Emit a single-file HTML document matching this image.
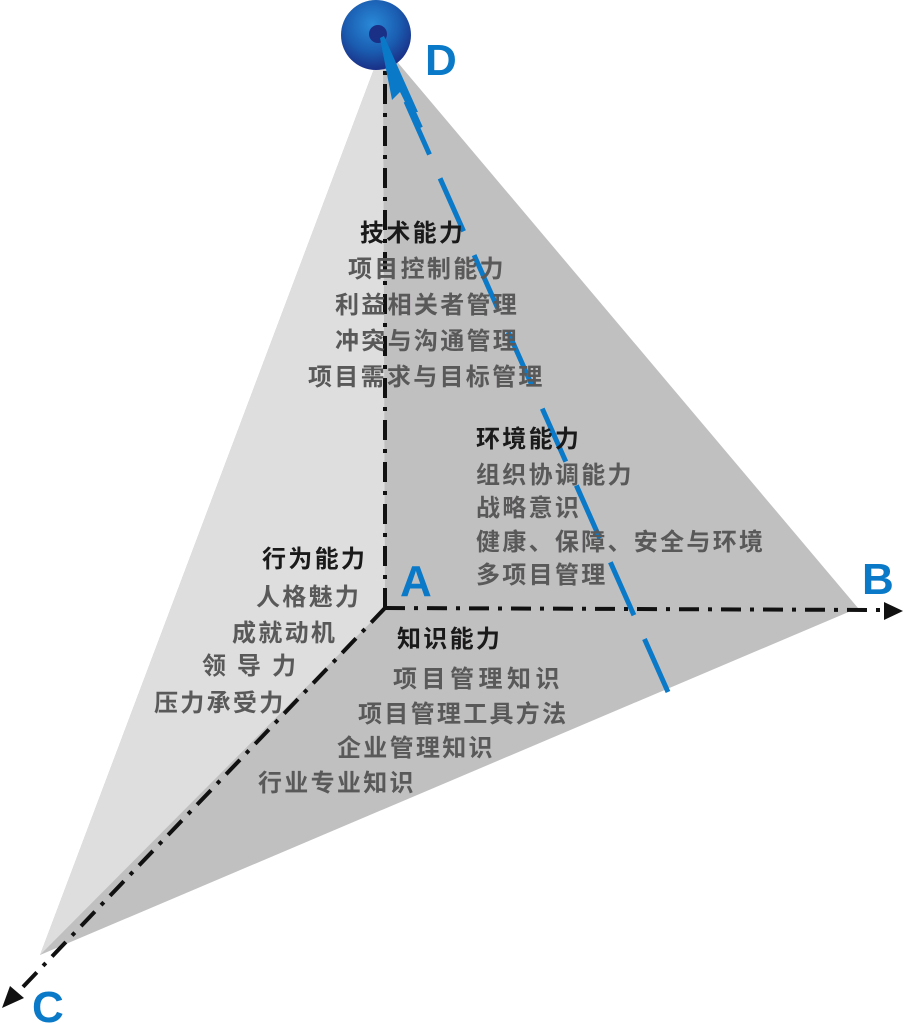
<!DOCTYPE html>
<html><head><meta charset="utf-8"><style>
body{margin:0;background:#fff;width:903px;height:1024px;overflow:hidden}
svg{display:block}
text{font-family:"Liberation Sans","Noto Sans CJK SC",sans-serif;font-weight:bold;letter-spacing:2.3px}
.h{fill:#1a1a1a;font-size:24px}
.g{fill:#595959;font-size:24px}
.L{fill:#0a7ac8;font-size:44px;letter-spacing:0}
</style></head><body>
<svg width="903" height="1024" viewBox="0 0 903 1024">
<defs>
<radialGradient id="bg" cx="0.45" cy="0.35" r="0.65">
<stop offset="0" stop-color="#2a8ad8"/><stop offset="0.6" stop-color="#1a5cb0"/><stop offset="1" stop-color="#1a2f86"/>
</radialGradient>
</defs>
<polygon points="383,45 858,608 40,955" fill="#c1c0c1"/>
<polygon points="383,45 385,608 40,955" fill="#dedede"/>
<g stroke="#111" stroke-width="4" fill="none" stroke-dasharray="20,9,4,9">
<line x1="385" y1="608" x2="385" y2="60"/>
<line x1="385" y1="608" x2="880" y2="610"/>
<line x1="385" y1="608" x2="20" y2="990"/>
</g>
<polygon points="903,611 884,602 884,620" fill="#111"/>
<polygon points="2,1008 10,986 24,998" fill="#111"/>
<line x1="668" y1="692" x2="392" y2="70" stroke="#0a7ac8" stroke-width="5" stroke-dasharray="58,26"/>
<circle cx="376" cy="35" r="35" fill="url(#bg)"/>
<circle cx="378" cy="34" r="9" fill="#1a2f86"/>
<polygon points="380,38 384,36 418,112 410,112 400,92 392,100" fill="#0a7ac8"/>
<line x1="385" y1="50" x2="420" y2="128" stroke="#0a7ac8" stroke-width="6"/>
<text class="L" x="425" y="75">D</text>
<text class="L" x="400" y="596">A</text>
<text class="L" x="862" y="594">B</text>
<text class="L" x="32" y="1022">C</text>
<text class="h" x="360" y="241">技术能力</text>
<text class="g" x="348" y="277">项目控制能力</text>
<text class="g" x="335" y="313">利益相关者管理</text>
<text class="g" x="335" y="349">冲突与沟通管理</text>
<text class="g" x="308" y="385">项目需求与目标管理</text>
<text class="h" x="476" y="447">环境能力</text>
<text class="g" x="476" y="483">组织协调能力</text>
<text class="g" x="476" y="516">战略意识</text>
<text class="g" x="476" y="550">健康、保障、安全与环境</text>
<text class="g" x="476" y="583">多项目管理</text>
<text class="h" x="262" y="567">行为能力</text>
<text class="g" x="256" y="605">人格魅力</text>
<text class="g" x="232" y="641">成就动机</text>
<text class="g" x="202" y="674" style="letter-spacing:11px">领导力</text>
<text class="g" x="154" y="711">压力承受力</text>
<text class="h" x="397" y="647">知识能力</text>
<text class="g" x="393" y="687" style="letter-spacing:4.5px">项目管理知识</text>
<text class="g" x="358" y="722">项目管理工具方法</text>
<text class="g" x="337" y="756">企业管理知识</text>
<text class="g" x="258" y="791">行业专业知识</text>
</svg>
</body></html>
